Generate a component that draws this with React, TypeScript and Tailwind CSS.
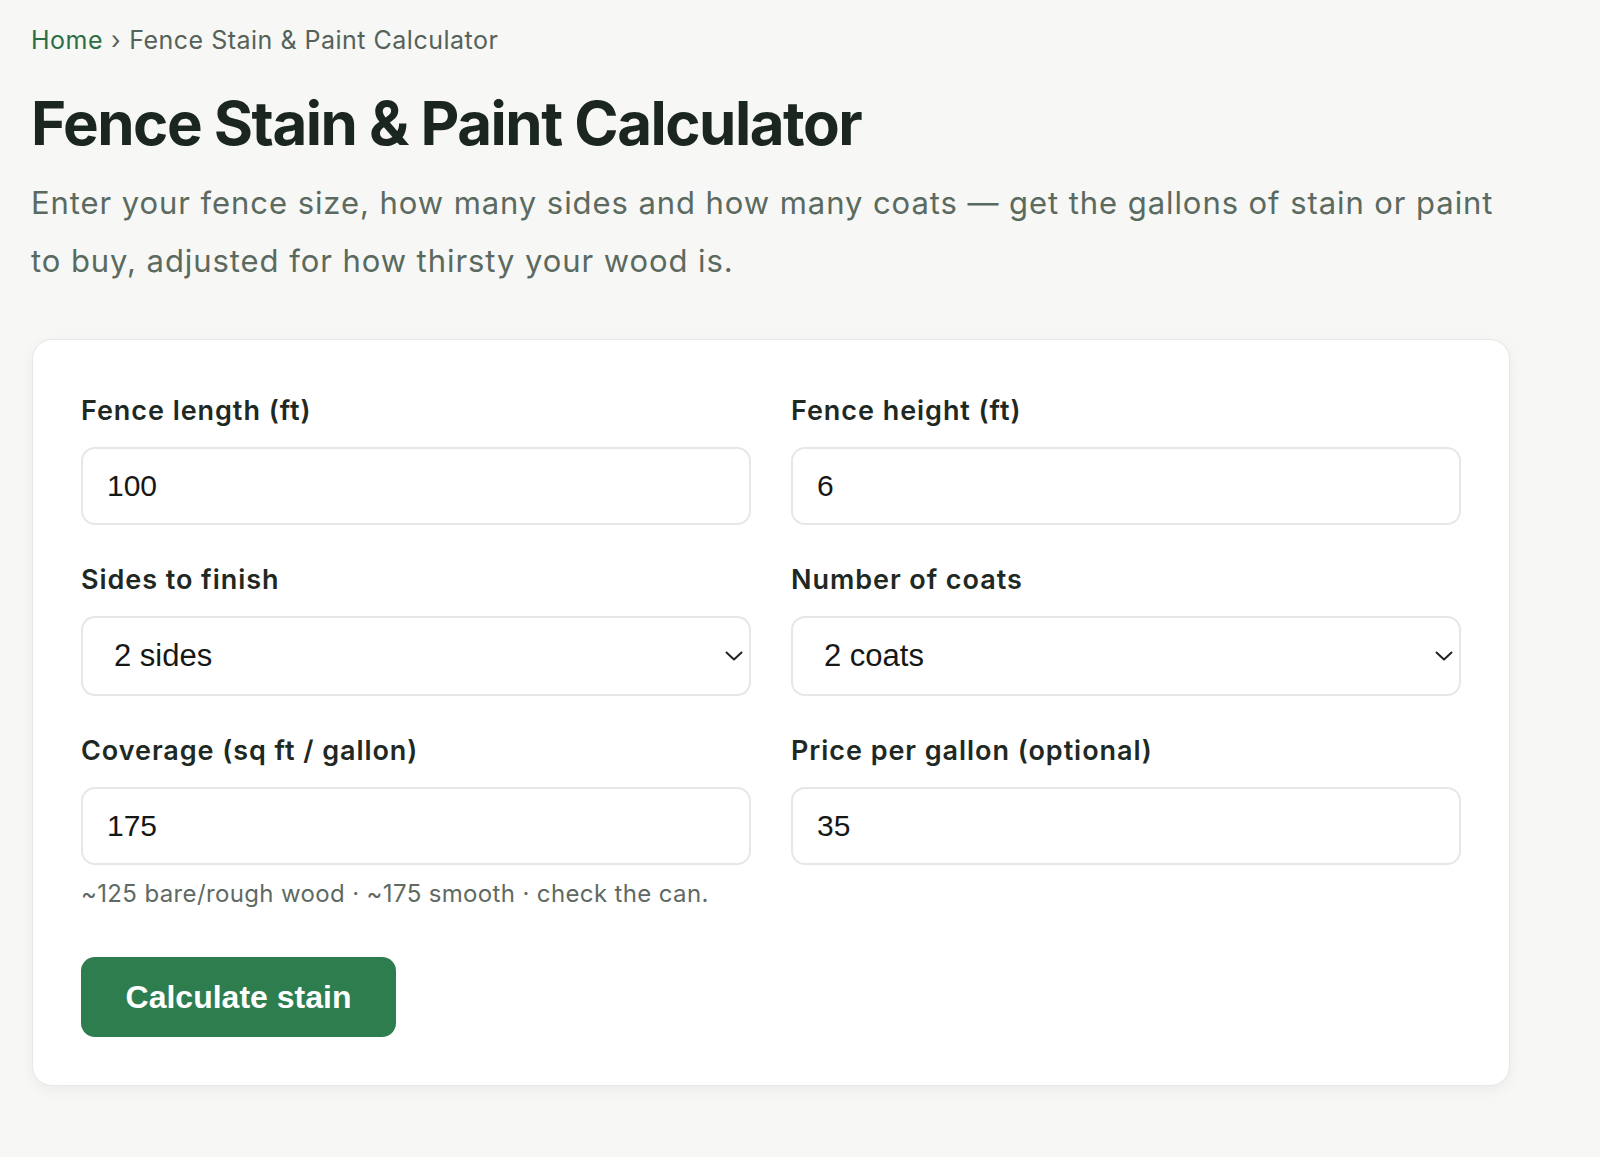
import React from 'react'

const labelCls = 'block text-[27px] leading-[36px] font-semibold tracking-[0.035em] text-[#1f2923] mb-[18px]'
const inputCls =
    'w-full h-[78px] rounded-[14px] border-2 border-[#e6e7e6] bg-white pl-[24px] text-[30px] text-[#161816] outline-none font-["Liberation_Sans",Arial,sans-serif]'

function Chevron() {
    return (
        <svg
            className="pointer-events-none absolute right-[8px] top-1/2 -translate-y-1/2"
            width="18"
            height="10"
            viewBox="0 0 18 10"
            fill="none"
        >
            <path d="M1.5 1.5L9 8.5L16.5 1.5" stroke="#222" strokeWidth="2" strokeLinecap="round" strokeLinejoin="round" />
        </svg>
    )
}

function Field({ label, value }: { label: string; value: string }) {
    return (
        <div>
            <label className={labelCls}>{label}</label>
            <input className={inputCls} defaultValue={value} />
        </div>
    )
}

function SelectField({ label, value, options }: { label: string; value: string; options: string[] }) {
    return (
        <div>
            <label className={labelCls}>{label}</label>
            <div className="relative">
                <select
                    defaultValue={value}
                    className='w-full h-[80px] appearance-none rounded-[14px] border-2 border-[#e6e7e6] bg-white pl-[31px] text-[31px] text-[#161816] outline-none font-["Liberation_Sans",Arial,sans-serif]'
                >
                    {options.map((o) => (
                        <option key={o}>{o}</option>
                    ))}
                </select>
                <Chevron />
            </div>
        </div>
    )
}

export default function App() {
    return (
        <div className="min-h-screen bg-[#f7f7f5] font-['Inter',sans-serif]">
            <div className="pl-[31px] pt-[22px] w-[1510px]">
                {/* Breadcrumb */}
                <nav className="text-[25px] leading-[36px] tracking-[0.02em] text-[#55625a]">
                    <a href="#" className="text-[#2d6e47]">Home</a>
                    <span className="mx-[8px]">›</span>
                    <span>Fence Stain &amp; Paint Calculator</span>
                </nav>

                {/* Title */}
                <h1 className="mt-[29px] text-[60px] leading-[72px] font-bold tracking-[-0.025em] text-[#1a261f]">
                    Fence Stain &amp; Paint Calculator
                </h1>

                <p className="mt-[15px] max-w-[1478px] text-[31px] leading-[58px] tracking-[0.03em] text-[#5b6a60]">
                    Enter your fence size, how many sides and how many coats — get the gallons of stain or paint
                    to buy, adjusted for how thirsty your wood is.
                </p>

                {/* Calculator card */}
                <div className="mt-[49px] ml-[1px] w-[1478px] rounded-[20px] border border-[#e6e8e5] bg-white px-[48px] pt-[53px] pb-[48px] shadow-[0_4px_14px_rgba(0,0,0,0.05)]">
                    <div className="grid grid-cols-2 gap-x-[40px] gap-y-[37px]">
                        <Field label="Fence length (ft)" value="100" />
                        <Field label="Fence height (ft)" value="6" />
                        <SelectField label="Sides to finish" value="2 sides" options={['1 side', '2 sides']} />
                        <SelectField label="Number of coats" value="2 coats" options={['1 coat', '2 coats', '3 coats']} />
                        <div>
                            <Field label="Coverage (sq ft / gallon)" value="175" />
                            <p className="mt-[12px] text-[24px] leading-[34px] tracking-[0.015em] text-[#5f6a63]">
                                ~125 bare/rough wood · ~175 smooth · check the can.
                            </p>
                        </div>
                        <Field label="Price per gallon (optional)" value="35" />
                    </div>

                    <button className='mt-[46px] h-[80px] w-[315px] rounded-[14px] bg-[#2e7d4f] text-[32px] font-bold text-white font-["Liberation_Sans",Arial,sans-serif]'>
                        Calculate stain
                    </button>
                </div>
            </div>
        </div>
    )
}
